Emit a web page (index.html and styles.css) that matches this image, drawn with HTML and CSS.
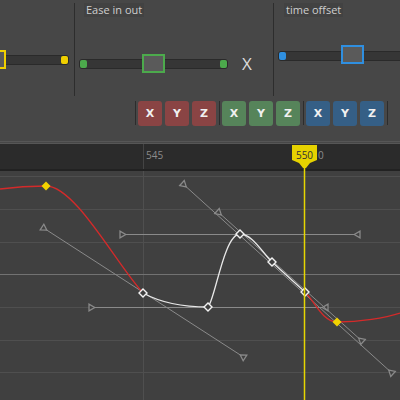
FILE: index.html
```html
<html>
<head>
    <meta charset="UTF-8">
    <meta name="viewport" content="width=device-width, initial-scale=1.0">
    <title>Graph Editor</title>
    <link rel="stylesheet" href="styles.css">
</head>
<body>

    <div class="panel">
        <div class="sliders">
            <div class="col col-a">
                <div class="track track-a">
                    <span class="box box-yellow"></span>
                    <span></span>
                    <span class="end end-yellow"></span>
                </div>
            </div>
            <div class="col col-b">
                <div class="label">Ease in out</div>
                <div class="row">
                    <div class="track track-b">
                        <span class="end end-green"></span>
                        <span class="box box-green"></span>
                        <span class="end end-green"></span>
                    </div>
                    <span class="axis">X</span>
                </div>
            </div>
            <div class="col col-c">
                <div class="label">time offset</div>
                <div class="track track-c">
                    <span class="end end-blue"></span>
                    <span class="box box-blue"></span>
                    <span></span>
                </div>
            </div>
        </div>

        <div class="buttons">
            <span class="sep"></span>
            <div class="group">
                <button class="btn red">X</button>
                <button class="btn red">Y</button>
                <button class="btn red">Z</button>
            </div>
            <span class="sep"></span>
            <div class="group">
                <button class="btn green">X</button>
                <button class="btn green">Y</button>
                <button class="btn green">Z</button>
            </div>
            <span class="sep"></span>
            <div class="group">
                <button class="btn blue">X</button>
                <button class="btn blue">Y</button>
                <button class="btn blue">Z</button>
            </div>
            <span class="sep"></span>
        </div>
    </div>

    <!-- timeline ruler + curve canvas -->
    <svg class="graph" width="400" height="257" viewBox="0 143 400 257">
        <defs>
            <marker id="tri" markerUnits="userSpaceOnUse" markerWidth="10" markerHeight="10"
                    viewBox="-6 -4 8 8" refX="0" refY="0" orient="auto-start-reverse">
                <path d="M0,-2.7 L0,2.7 L-4.6,0 Z" fill="#404040" stroke="#8a8a8a" stroke-width="1"/>
            </marker>
        </defs>

        <rect x="0" y="143" width="400" height="1" fill="#565656"/>
        <rect x="0" y="144" width="400" height="25" fill="#2b2b2b"/>
        <rect x="0" y="169" width="400" height="2" fill="#222"/>
        <rect x="0" y="171" width="400" height="229" fill="#404040"/>

        <line x1="143.5" y1="144" x2="143.5" y2="169" stroke="#444"/>
        <text class="tick" x="146" y="159">545</text>
        <text class="tick" x="318" y="159">0</text>

        <g stroke="#4f4f4f" stroke-width="1">
            <line x1="0" y1="176.5" x2="400" y2="176.5"/>
            <line x1="0" y1="209.5" x2="400" y2="209.5"/>
            <line x1="0" y1="242.5" x2="400" y2="242.5"/>
            <line x1="0" y1="307.5" x2="400" y2="307.5"/>
            <line x1="0" y1="340.5" x2="400" y2="340.5"/>
            <line x1="0" y1="372.5" x2="400" y2="372.5"/>
            <line x1="143.5" y1="171" x2="143.5" y2="400"/>
        </g>
        <line x1="0" y1="274.5" x2="400" y2="274.5" stroke="#727272"/>

        <g stroke="#8a8a8a" stroke-width="1" marker-start="url(#tri)" marker-end="url(#tri)">
            <line x1="42" y1="227" x2="245" y2="358"/>
            <line x1="89" y1="307.5" x2="328" y2="307.5"/>
            <line x1="120" y1="234.5" x2="360" y2="234.5"/>
            <line x1="182" y1="183" x2="393" y2="374"/>
            <line x1="217" y1="211" x2="363" y2="342"/>
        </g>

        <g fill="none" stroke-width="1.3">
            <path d="M0,189 C15,187 30,186 46,186 C75,186 115,262 143,293" stroke="#d42a2a"/>
            <path d="M143,293 C165,305 190,307 208,307 C215,300 224,234 240,234 C252,234 262,252 272,262 L305,292" stroke="#e8e8e8"/>
            <path d="M305,292 C315,302 322,321 337,322 C360,322 385,318 400,313" stroke="#d42a2a"/>
        </g>

        <g fill="#404040" stroke="#f2f2f2" stroke-width="1.4">
            <path d="M143,289 L147,293 L143,297 L139,293 Z"/>
            <path d="M208,303 L212,307 L208,311 L204,307 Z"/>
            <path d="M240,230 L244,234 L240,238 L236,234 Z"/>
            <path d="M272,258 L276,262 L272,266 L268,262 Z"/>
            <path d="M305,288 L309,292 L305,296 L301,292 Z"/>
        </g>
        <g fill="#f2d200">
            <path d="M46,181.5 L50.5,186 L46,190.5 L41.5,186 Z"/>
            <path d="M337,317.5 L341.5,322 L337,326.5 L332.5,322 Z"/>
        </g>

        <line x1="304.5" y1="162" x2="304.5" y2="400" stroke="#e6d600" stroke-width="1.5"/>
        <path d="M292,145 L317,145 L317,160 L310,163 L306,168 L303,168 L299,163 L292,160 Z" fill="#e6d200"/>
        <text class="flag" x="304.5" y="159">550</text>
    </svg>

</body>
</html>
```

FILE: styles.css
```css
body { margin: 0; width: 400px; height: 400px; overflow: hidden; background: #404040; font-family: "Open Sans", "Noto Sans", sans-serif; }
.panel { background: #474747; height: 143px; }
.sliders { display: flex; height: 97px; }
.col { margin-top: 3px; height: 93px; }
.col-a { width: 74px; overflow: hidden; }
.col-b { width: 198px; border-left: 1px solid #2d2d2d; }
.col-c { flex: 1; border-left: 1px solid #2d2d2d; overflow: hidden; }
.label { display: inline-block; margin-left: 9px; height: 14px; padding: 0 2px; background: #424242; color: #cfcfcf; font-size: 11px; line-height: 14px; }
.col-c .label { margin-left: 10px; }
.row { display: flex; align-items: center; margin-top: 35px; }
.track { position: relative; box-sizing: border-box; height: 10px; display: flex; justify-content: space-between; background: #363636; border: 1px solid #2a2a2a; border-radius: 3px; }
.track-a { margin: 52px 5px 0 -20px; }
.track-b { width: 149px; margin-left: 4px; }
.track-c { width: 160px; margin: 34px 0 0 4px; }
.end { width: 7px; height: 8px; border-radius: 2px; }
.end-yellow { background: #f0d000; }
.end-green { background: #4caa4c; }
.end-blue { background: #2f8fe0; }
.box { position: absolute; top: -6px; width: 23px; height: 19px; box-sizing: border-box; border: 2px solid; background: #5a5a5a; }
.box-yellow { left: 2px; border-color: #f0d000; }
.box-green { left: 62px; border-color: #4caa4c; }
.box-blue { left: 62px; top: -7px; border-color: #2f8fe0; }
.axis { margin-left: 14px; color: #dcdcdc; font-size: 17px; }
.buttons { display: flex; align-items: center; height: 45px; padding-left: 135px; border-bottom: 1px solid #565656; box-sizing: border-box; padding-bottom: 12px; }
.sep { width: 1px; height: 24px; background: #2c2c2c; }
.group { display: flex; gap: 3px; padding: 0 3px 0 2px; }
.btn { width: 24px; height: 25px; padding: 0; border: none; border-radius: 3px; color: #f0f0f0; font-family: "DejaVu Sans", sans-serif; font-size: 11px; font-weight: bold; }
.red { background: #8a4444; }
.green { background: #56845a; }
.blue { background: #355f86; }
.graph { display: block; }
.tick { fill: #8c8c8c; font-size: 10px; font-family: "Open Sans", sans-serif; }
.flag { fill: #333; font-size: 10px; font-family: "Open Sans", sans-serif; text-anchor: middle; }
```
